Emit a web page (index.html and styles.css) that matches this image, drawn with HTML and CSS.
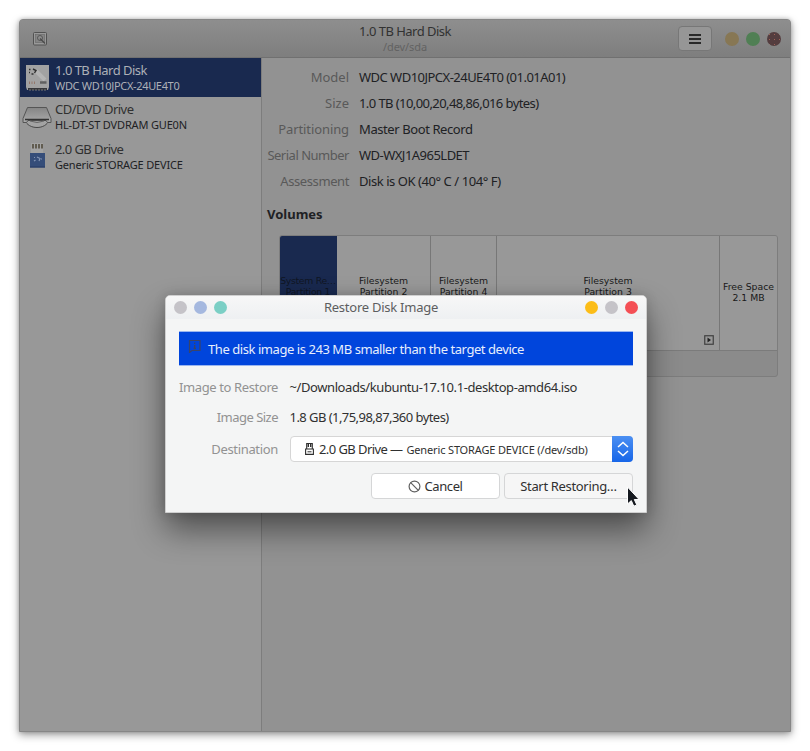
FILE: index.html
```html
<!DOCTYPE html>
<html lang="en">
<head>
<meta charset="utf-8">
<title>Disks</title>
<link rel="stylesheet" href="styles.css">
</head>
<body>
<div class="window">
  <header class="headerbar">
    <svg class="app-icon" viewBox="0 0 14 14"><rect x=".5" y=".5" width="13" height="12.5" rx="1" fill="#999" stroke="#525252"/><rect x="2.500" y="2.500" width="9" height="8" fill="#858585" stroke="#6b6b6b" stroke-width=".7"/><circle cx="7" cy="6" r="2.500" fill="#8d8d8d" stroke="#565656"/><path d="M7 6.500l5 5" stroke="#4a4a4a" stroke-width="1.300"/></svg>
    <div class="heading"><div class="heading-title t50">1.0 TB Hard Disk</div><div class="heading-sub">/dev/sda</div></div>
    <div class="header-end">
      <div class="menu"><svg width="12" height="12" viewBox="0 0 12 12"><path d="M0 2h12M0 6h12M0 10h12" stroke="#292929" stroke-width="2"/></svg></div>
      <i class="dot amber"></i><i class="dot green"></i><i class="dot maroon"></i>
    </div>
  </header>
  <div class="body">
    <aside class="sidebar">
      <div class="drive selected">
        <svg class="drive-icon" viewBox="0 0 30 30"><path d="M4 2h23v22l-1 3H5l-1-3z" fill="#a2a2a2"/><path d="M6 25h19v2H6z" fill="#35363a"/><path d="M7 27h17" stroke="#777" stroke-dasharray="2 1"/><path d="M14 8l9 9" stroke="#b4b4b4" stroke-width="4"/><path d="M7 6.500h1.500M11 6l3 1.500-1.500 2.500M7 9.500h1M9.500 11h2" fill="none" stroke="#303030" stroke-width="1.400"/><path d="M7.500 18.500v2.500M10 18.500v2.500M12.500 18.500v2.500" stroke="#95786c"/><path d="M18 19.500h6.500" stroke="#606060" stroke-width="2.500"/></svg>
        <div class="drive-text"><div class="drive-name t50">1.0 TB Hard Disk</div><div class="drive-model t33">WDC WD10JPCX-24UE4T0</div></div>
      </div>
      <div class="drive">
        <svg class="drive-icon" viewBox="0 0 30 30"><defs><linearGradient id="tray" x2="0" y2="1"><stop stop-color="#858585"/><stop offset="1" stop-color="#ababab"/></linearGradient></defs><path d="M3 18c3 10 21 10 24 0z" fill="#a3a3a3" stroke="#484848"/><path d="M5.500 5.500h19l4.500 11v4h-3.500l-1.500-2H6l-1.500 2H1v-4z" fill="url(#tray)" stroke="#555"/><path d="M3 17.500h24" stroke="#333" stroke-width="1.500"/><path d="M8 19q7 3 14 0" fill="none" stroke="#666"/></svg>
        <div class="drive-text"><div class="drive-name t50">CD/DVD Drive</div><div class="drive-model t16">HL-DT-ST DVDRAM GUE0N</div></div>
      </div>
      <div class="drive">
        <svg class="drive-icon" viewBox="0 0 30 30"><path d="M9 2h12v11H9z" fill="#a3a3a3"/><path d="M11 3v4.500M14 3v4.500M17 3v4.500M20 3v4.500" stroke="#4b4435" stroke-width="1.500"/><path d="M8 12h15v14.500H8z" fill="#354d79"/><path d="M8 26h15" stroke="#263b64"/><path d="M12 20l1.500-1M15 16l3 1.500-1 2.500M19 18h1M12 16.500h1" stroke="#8495b5" stroke-width="1.200" fill="none"/></svg>
        <div class="drive-text"><div class="drive-name t58">2.0 GB Drive</div><div class="drive-model t16">Generic STORAGE DEVICE</div></div>
      </div>
    </aside>
    <main class="details">
      <dl class="facts">
        <dt>Model</dt><dd class="t50">WDC WD10JPCX-24UE4T0 (01.01A01)</dd>
        <dt>Size</dt><dd class="t58">1.0 TB (10,00,20,48,86,016 bytes)</dd>
        <dt class="t27">Partitioning</dt><dd class="t40">Master Boot Record</dd>
        <dt class="t45">Serial Number</dt><dd class="t50">WD-WXJ1A965LDET</dd>
        <dt class="t40">Assessment</dt><dd class="t43">Disk is OK (40° C / 104° F)</dd>
      </dl>
      <h2 class="volumes-title">Volumes</h2>
      <div class="volumes">
        <div class="grid">
          <div class="volume active">System Re…<br>Partition 1</div>
          <div class="volume">Filesystem<br>Partition 2</div>
          <div class="volume">Filesystem<br>Partition 4</div>
          <div class="volume">Filesystem<br>Partition 3<svg class="play" viewBox="0 0 10 10"><rect x=".75" y=".75" width="8.500" height="8.500" fill="none" stroke="#404040" stroke-width="1.200"/><path d="M3.500 2.500l3.500 2.500-3.500 2.500z" fill="#222"/></svg></div>
          <div class="volume free">Free Space<br>2.1 MB</div>
        </div>
        <div class="toolbar"></div>
      </div>
    </main>
  </div>
</div>

<section class="dialog">
  <header class="dialog-bar">
    <div class="dots"><i class="dot silver"></i><i class="dot periwinkle"></i><i class="dot teal"></i></div>
    <div class="dialog-title">Restore Disk Image</div>
    <div class="dots"><i class="dot yellow"></i><i class="dot silver"></i><i class="dot red"></i></div>
  </header>
  <div class="notice">
    <svg width="13" height="13" viewBox="0 0 13 13"><path d="M1.500.5h10.500v10H4L1.500 12.500z" fill="none" stroke="#3a4468" stroke-width="1.200"/><path d="M6.700 2.500v1.500M6.700 5v3.500M5.500 8.500h2.500" stroke="#3a4468" stroke-width="1.300"/></svg>
    <span class="t43">The disk image is 243 MB smaller than the target device</span>
  </div>
  <div class="form">
    <div class="label t38">Image to Restore</div><div class="value t40">~/Downloads/kubuntu-17.10.1-desktop-amd64.iso</div>
    <div class="label t50">Image Size</div><div class="value t52">1.8 GB (1,75,98,87,360 bytes)</div>
    <div class="label t33">Destination</div>
    <div class="select">
      <svg class="usb" width="9" height="12" viewBox="0 0 9 12"><path d="M1.700.5h5.600v5.500H1.700zM.6 6h7.800v5.400H.6z" fill="none" stroke="#2f2f2f" stroke-width="1.100"/><path d="M3.300 1v3M5.700 1v3" stroke="#2f2f2f" stroke-width="1.400"/><path d="M2.500 8.800h4" stroke="#2f2f2f"/></svg>
      <span class="select-main t58">2.0 GB Drive —</span><span class="select-small">Generic STORAGE DEVICE (/dev/sdb)</span>
      <div class="stepper"><svg width="12" height="16" viewBox="0 0 12 16"><path d="M1 6l5-4.500L11 6M1 10l5 4.500L11 10" fill="none" stroke="#fff" stroke-width="1.500"/></svg></div>
    </div>
  </div>
  <div class="actions">
    <button class="button cancel"><svg width="13" height="13" viewBox="0 0 13 13"><circle cx="6.500" cy="6.500" r="5.400" fill="none" stroke="#606060" stroke-width="1.200"/><path d="M2.700 2.700l7.600 7.600" stroke="#606060" stroke-width="1.200"/></svg><span class="t38">Cancel</span></button>
    <button class="button start"><span class="t33">Start Restoring…</span></button>
  </div>
  <svg class="cursor" viewBox="0 0 14 22"><path d="M1.500 1v17l3.800-3.400 2.500 5.600 3-1.300-2.500-5.400h4.800z" fill="#15191f" stroke="#fff" stroke-width="1"/></svg>
</section>
</body>
</html>
```

FILE: styles.css
```css
* { box-sizing: border-box; }
body { margin: 0; padding: 19px; width: 810px; height: 751px; overflow: hidden; background: #fff; font: 13px/18px "Noto Sans", sans-serif; color: #202124; }

/* Tracking steps, in hundredths of a pixel */
.t16 { letter-spacing: -.17px; }
.t27 { letter-spacing: -.1px; }
.t33 { letter-spacing: -.33px; }
.t38 { letter-spacing: -.38px; }
.t40 { letter-spacing: -.41px; }
.t43 { letter-spacing: -.44px; }
.t45 { letter-spacing: -.49px; }
.t50 { letter-spacing: -.52px; }
.t52 { letter-spacing: -.55px; }
.t58 { letter-spacing: -.58px; }

.window { width: 772px; height: 713px; border: 1px solid #868686; border-radius: 4px 4px 0 0; background: #929292; box-shadow: 0 3px 9px rgba(0,0,0,.38), 0 0 4px rgba(0,0,0,.2); overflow: hidden; display: flex; flex-direction: column; }
.headerbar { height: 38px; flex: none; display: grid; grid-template-columns: 1fr auto 1fr; align-items: center; border-bottom: 1px solid #707070; background: linear-gradient(#8e8e8e, #7e7e7e); padding: 0 9px 0 13px; }
.app-icon { width: 14px; height: 14px; }
.heading { text-align: center; margin-left: -4px; color: #323232; }
.heading-title { line-height: 17px; }
.heading-sub { font-size: 11px; line-height: 14px; color: #626262; letter-spacing: -.1px; }
.header-end { display: flex; align-items: center; justify-content: flex-end; gap: 7px; }
.menu { width: 34px; height: 25px; border: 1px solid #777; border-radius: 4px; background: #969696; display: flex; align-items: center; justify-content: center; margin-right: 6px; }
.dot { display: block; width: 14px; height: 14px; border-radius: 50%; flex: none; }
.amber { background: #877754; }
.green { background: #507f54; }
.maroon { background: radial-gradient(circle, #a16357 .5px, transparent .9px) 0 0 / 5px 5px #543d3f; }
.body { display: flex; flex: 1; min-height: 0; }
.sidebar { width: 242px; flex: none; border-right: 1px solid #7d7d7d; background: #989898; }
.drive { height: 39.500px; display: flex; align-items: center; padding-left: 2px; gap: 3px; }
.drive-icon { width: 30px; height: 30px; flex: none; }
.drive-name { line-height: 16px; color: #303030; }
.drive-model { font-size: 11px; line-height: 15px; }
.selected { height: 39px; background: #19294f; color: #adb0b7; }
.selected .drive-name { color: #adb0b7; }
.details { flex: 1; padding: 6px 12px 0 5px; }
.facts { margin: 0; display: grid; grid-template-columns: 82px 1fr; column-gap: 10px; grid-auto-rows: 26px; line-height: 26px; }
.facts dt { text-align: right; color: #595959; white-space: nowrap; }
.facts dd { margin: 0; }
.volumes-title { margin: 11px 0 12px 0; font-size: 13px; line-height: 18px; font-weight: 700; }
.volumes { margin-left: 12px; border: 1px solid #7d7d7d; border-radius: 3px; height: 142px; width: 499px; overflow: hidden; background: #8b8b8b; }
.grid { display: grid; grid-template-columns: 57px 94px 66px 223px 57px; height: 115px; border-bottom: 1px solid #7b7b7b; background: #989898; }
.volume { position: relative; border-right: 1px solid #777; padding-top: 39px; font: 9.300px/11px "DejaVu Sans", sans-serif; text-align: center; white-space: nowrap; color: #181818; }
.active { background: #19294f; color: #101623; letter-spacing: -.3px; border-right-color: #19294f; }
.free { padding-top: 45px; border-right: 0; }
.play { position: absolute; right: 5px; bottom: 5px; width: 10px; height: 10px; }
.dialog { position: absolute; left: 165px; top: 295px; width: 482px; height: 218px; border: 1px solid #cfcfcf; border-radius: 5px 5px 0 0; background: #f4f5f5; box-shadow: 0 17px 32px rgba(0,0,0,.47), 0 0 12px rgba(0,0,0,.15); padding: 0 13px; color: #303030; }
.dialog-bar { height: 23px; margin: 0 -13px; padding: 0 8px; background: linear-gradient(#f7f7f7, #eef0f2); border-radius: 4px 4px 0 0; display: flex; align-items: center; justify-content: space-between; white-space: nowrap; }
.dots { display: flex; gap: 7px; }
.dots .dot { width: 13px; height: 13px; }
.dialog-title { color: #5d5e60; padding: 0 50px 2px 0; letter-spacing: -.25px; }
.silver { background: #c5c3c8; }
.periwinkle { background: #a5b8df; }
.teal { background: #7bcfc5; }
.yellow { background: #fcbd18; }
.red { background: #f44f55; }
.notice { margin-top: 12px; height: 35px; border: solid #9ab5ef; border-width: 1px 0; background: #0045dc; color: #e7eefc; display: flex; align-items: center; gap: 7px; padding-left: 9px; }
.notice svg { margin-top: -4px; }
.form { display: grid; grid-template-columns: 99px 343px; column-gap: 12px; grid-template-rows: 30px 30px 34px; padding-top: 6px; align-items: center; }
.label { text-align: right; color: #929292; white-space: nowrap; }
.value { margin-left: -.500px; white-space: nowrap; }
.select { height: 26px; border: 1px solid #d6d6d6; border-radius: 4px; background: #fff; display: flex; align-items: center; padding-left: 14px; white-space: nowrap; }
.usb { margin-right: 5px; }
.select-main { margin-right: 4px; }
.select-small { font-size: 11px; letter-spacing: -.15px; padding-top: 1px; }
.stepper { width: 21px; height: 26px; margin: -1px -1px -1px auto; border-radius: 0 4px 4px 0; background: linear-gradient(#4b8ff2, #1766e8); display: flex; align-items: center; justify-content: center; }
.actions { display: flex; justify-content: flex-end; gap: 4px; margin-top: 7px; }
.button { width: 129px; height: 26px; padding: 0; border: 1px solid #d5d6d7; border-radius: 4px; background: #fff; font: inherit; color: #303030; display: flex; align-items: center; justify-content: center; gap: 3px; }
.start { background: #f6f6f6; }
.cursor { position: absolute; left: 459.500px; top: 190px; width: 14px; height: 22px; }
```
